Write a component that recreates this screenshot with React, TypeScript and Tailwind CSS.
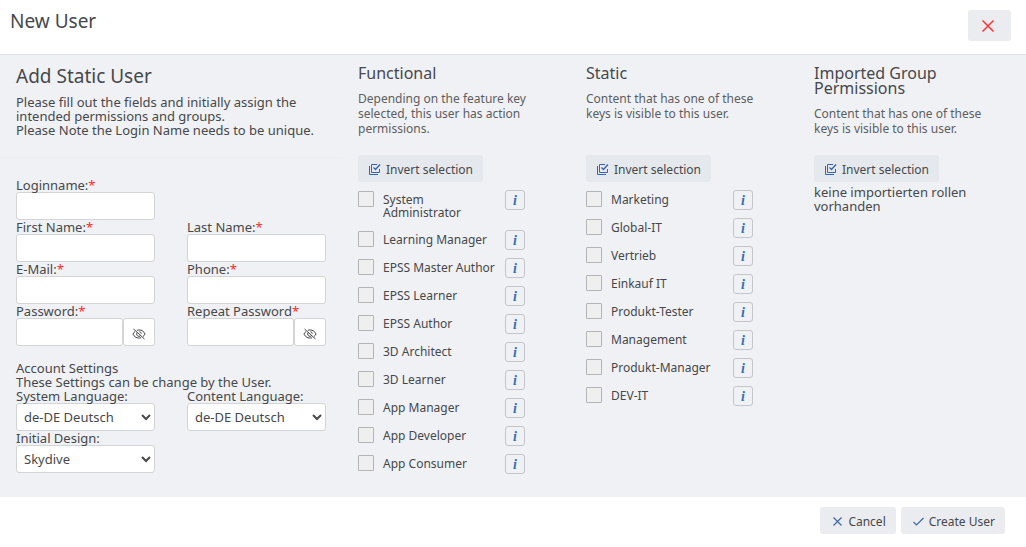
import { useState } from "react";
import type { ReactNode } from "react";

const functionalRoles = [
  "System Administrator",
  "Learning Manager",
  "EPSS Master Author",
  "EPSS Learner",
  "EPSS Author",
  "3D Architect",
  "3D Learner",
  "App Manager",
  "App Developer",
  "App Consumer",
];

const staticRoles = [
  "Marketing",
  "Global-IT",
  "Vertrieb",
  "Einkauf IT",
  "Produkt-Tester",
  "Management",
  "Produkt-Manager",
  "DEV-IT",
];

const inputClass =
  "block h-7 w-full min-w-0 rounded-[3px] border border-[#d3d4d6] bg-white text-[13px] outline-none";

function InvertIcon() {
  return (
    <svg width="13" height="13" viewBox="0 0 13 13" fill="none" stroke="#3564b0">
      <path d="M9 1.5H3.5v8h8V6" />
      <path d="M1.5 3v8.5H10" />
      <path d="M5.5 4.5l2 2 4.500-5" strokeWidth="1.300" />
    </svg>
  );
}

function EyeOffIcon() {
  return (
    <svg width="14" height="14" viewBox="0 0 14 14" fill="none" stroke="#444">
      <path d="M4.800 3.300C9 2 12 4.500 13 7c-.4 1-1 1.800-2 2.500M9.200 10.700C5 12 2 9.500 1 7c.4-1 1-1.800 2-2.500" />
      <path d="M8.700 8.600A2.300 2.300 0 0 1 5.300 5.400M7.300 4.700A2.300 2.300 0 0 1 9.300 6.800" />
      <path d="M1.500 2l11 10" />
    </svg>
  );
}

function Field({
  id,
  label,
  required,
  children,
}: {
  id: string;
  label: string;
  required?: boolean;
  children: ReactNode;
}) {
  return (
    <div className="px-4">
      <label htmlFor={id} className="block whitespace-nowrap">
        {label}
        {required && <span className="text-[#ff2a2a]">*</span>}
      </label>
      {children}
    </div>
  );
}

function PasswordInput({ id }: { id: string }) {
  const [visible, setVisible] = useState(false);

  return (
    <div className="flex">
      <input
        id={id}
        type={visible ? "text" : "password"}
        className={`${inputClass} px-2`}
      />
      <button
        type="button"
        aria-label="Show password"
        onClick={() => setVisible(!visible)}
        className="flex h-7 w-8 shrink-0 items-center justify-center rounded-[3px] border border-[#d3d4d6] bg-white pt-1"
      >
        <EyeOffIcon />
      </button>
    </div>
  );
}

function RoleColumn({
  title,
  description,
  roles,
  children,
}: {
  title: string;
  description: string;
  roles: string[];
  children?: ReactNode;
}) {
  const [selected, setSelected] = useState<string[]>([]);

  function toggle(role: string) {
    setSelected(
      selected.includes(role)
        ? selected.filter((item) => item !== role)
        : [...selected, role],
    );
  }

  return (
    <section className="col-span-2 pr-8 pl-4">
      <div className="h-[100px] pt-[11px]">
        <h3 className="text-base leading-[15px]">{title}</h3>
        <p className="mt-[10px] text-[12px] leading-[15px] text-[#5c5e62]">
          {description}
        </p>
      </div>
      <button
        type="button"
        onClick={() =>
          setSelected(roles.filter((role) => !selected.includes(role)))
        }
        className="flex h-[27px] items-center gap-[5px] rounded-[3px] bg-[#e5e8ed] px-[10px] pt-0.5 text-[12px] whitespace-nowrap"
      >
        <InvertIcon />
        Invert selection
      </button>
      {roles.length > 0 && (
        <ul className="mt-2 space-y-2">
          {roles.map((role) => (
            <li key={role} className="flex items-start pr-[13px]">
              <label className="flex flex-1 items-start gap-[9px] pr-1 text-[12px] leading-[13px]">
                <input
                  type="checkbox"
                  checked={selected.includes(role)}
                  onChange={() => toggle(role)}
                  className="mt-px size-4 shrink-0 appearance-none rounded-[1px] border border-[#b3b4b5] bg-[#efefef] checked:bg-[#3f68ac]"
                />
                <span className="py-[3px]">{role}</span>
              </label>
              <button
                type="button"
                aria-label={`Info: ${role}`}
                className="flex size-5 shrink-0 items-center justify-center rounded-[3px] border border-[#c3c5c9] pt-px font-['Liberation_Serif',serif] text-[14px] font-bold text-[#3a6bb5] italic"
              >
                i
              </button>
            </li>
          ))}
        </ul>
      )}
      {children}
    </section>
  );
}

export default function App() {
  return (
    <form
      onSubmit={(event) => event.preventDefault()}
      className="bg-white font-['Noto_Sans','Open_Sans',sans-serif] text-[13px] leading-[14px] text-[#46484b]"
    >
      <header className="flex h-[55px] items-start justify-between border-b border-[#dfe0e3] pt-[10px] pr-[15px] pl-[10px]">
        <h1 className="text-[19px] leading-[22px]">New User</h1>
        <button
          type="button"
          aria-label="Close"
          className="flex h-[31px] w-[43px] items-center justify-center rounded-[3px] bg-[#ebecf0] pr-1"
        >
          <svg width="12" height="12" viewBox="0 0 12 12" stroke="#ff3333" strokeWidth="1.500">
            <path d="M.5.5l11 11M11.500.5l-11 11" />
          </svg>
        </button>
      </header>

      <main className="grid min-h-[442px] grid-cols-9 bg-[#f0f1f4]">
        <section className="col-span-3">
          <div className="h-[103px] border-b border-[#ecedf0] px-4 pt-[10px]">
            <h2 className="text-[19px] leading-[22px]">Add Static User</h2>
            <p className="mt-2">
              Please fill out the fields and initially assign the intended
              permissions and groups.
              <br />
              Please Note the Login Name needs to be unique.
            </p>
          </div>

          <div className="mt-5 grid grid-cols-2">
            <Field id="login" label="Loginname:" required>
              <input id="login" className={`${inputClass} px-2`} />
            </Field>
            <div />
            <Field id="firstName" label="First Name:" required>
              <input id="firstName" className={`${inputClass} px-2`} />
            </Field>
            <Field id="lastName" label="Last Name:" required>
              <input id="lastName" className={`${inputClass} px-2`} />
            </Field>
            <Field id="email" label="E-Mail:" required>
              <input id="email" type="email" className={`${inputClass} px-2`} />
            </Field>
            <Field id="phone" label="Phone:" required>
              <input id="phone" type="tel" className={`${inputClass} px-2`} />
            </Field>
            <Field id="password" label="Password:" required>
              <PasswordInput id="password" />
            </Field>
            <Field id="repeatPassword" label="Repeat Password" required>
              <PasswordInput id="repeatPassword" />
            </Field>
          </div>

          <div className="mt-[15px] px-4">
            <h3>Account Settings</h3>
            <p>These Settings can be change by the User.</p>
          </div>
          <div className="grid grid-cols-2">
            <Field id="systemLanguage" label="System Language:">
              <select id="systemLanguage" className={`${inputClass} px-[3px]`}>
                <option>de-DE Deutsch</option>
              </select>
            </Field>
            <Field id="contentLanguage" label="Content Language:">
              <select id="contentLanguage" className={`${inputClass} px-[3px]`}>
                <option>de-DE Deutsch</option>
              </select>
            </Field>
            <Field id="design" label="Initial Design:">
              <select id="design" className={`${inputClass} px-[3px]`}>
                <option>Skydive</option>
              </select>
            </Field>
          </div>
        </section>

        <RoleColumn
          title="Functional"
          description="Depending on the feature key selected, this user has action permissions."
          roles={functionalRoles}
        />
        <RoleColumn
          title="Static"
          description="Content that has one of these keys is visible to this user."
          roles={staticRoles}
        />
        <RoleColumn
          title="Imported Group Permissions"
          description="Content that has one of these keys is visible to this user."
          roles={[]}
        >
          <p className="mt-[3px]">keine importierten rollen vorhanden</p>
        </RoleColumn>
      </main>

      <footer className="flex justify-end gap-[5px] pt-[10px] pr-[21px] pb-[13px] text-[12px]">
        <button
          type="button"
          className="flex h-[27px] items-center gap-[6px] rounded-[3px] bg-[#ebecf0] pt-0.5 pr-[10px] pl-[13px]"
        >
          <svg width="9" height="9" viewBox="0 0 9 9" stroke="#3f68ac" strokeWidth="1.200">
            <path d="M.5.5l8 8M8.500.5l-8 8" />
          </svg>
          Cancel
        </button>
        <button
          type="submit"
          className="flex h-[27px] items-center gap-[5px] rounded-[3px] bg-[#ebecf0] pt-0.5 pr-[10px] pl-3"
        >
          <svg width="11" height="9" viewBox="0 0 11 9" fill="none" stroke="#3f68ac" strokeWidth="1.200">
            <path d="M.5 5l3 3 7-7" />
          </svg>
          Create User
        </button>
      </footer>
    </form>
  );
}
